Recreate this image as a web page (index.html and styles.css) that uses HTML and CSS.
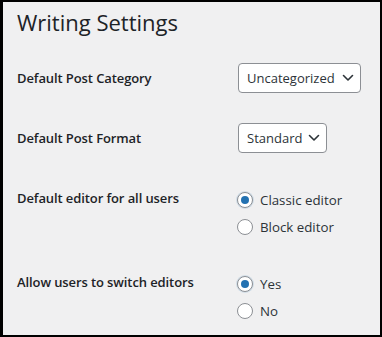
FILE: index.html
```html
<!DOCTYPE html>
<html lang="en">
<head>
<meta charset="utf-8">
<title>Writing Settings</title>
<link rel="stylesheet" href="styles.css">
</head>
<body>
<div class="frame">
  <h1 class="title">Writing Settings</h1>
  <div class="row row-first">
    <div class="label label-tall">Default Post Category</div>
    <div class="select select-wide">
      <span>Uncategorized</span>
      <svg class="chev" width="12" height="8" viewBox="0 0 12 8"><polyline points="1.5,1.5 6,6 10.5,1.5" fill="none" stroke="#2c3338" stroke-width="1.6" stroke-linecap="round" stroke-linejoin="round"/></svg>
    </div>
  </div>
  <div class="row row-second">
    <div class="label label-tall">Default Post Format</div>
    <div class="select">
      <span>Standard</span>
      <svg class="chev" width="12" height="8" viewBox="0 0 12 8"><polyline points="1.5,1.5 6,6 10.5,1.5" fill="none" stroke="#2c3338" stroke-width="1.6" stroke-linecap="round" stroke-linejoin="round"/></svg>
    </div>
  </div>
  <div class="row row-radio">
    <div class="label label-low">Default editor for all users</div>
    <div class="radios">
      <div class="opt"><span class="radio checked"></span><span>Classic editor</span></div>
      <div class="opt"><span class="radio"></span><span>Block editor</span></div>
    </div>
  </div>
  <div class="row row-radio2">
    <div class="label label-low">Allow users to switch editors</div>
    <div class="radios">
      <div class="opt"><span class="radio checked"></span><span>Yes</span></div>
      <div class="opt"><span class="radio"></span><span>No</span></div>
    </div>
  </div>
</div>
</body>
</html>
```

FILE: styles.css
```css
html, body {
  margin: 0;
  padding: 0;
  background: #000;
}
.frame {
  box-sizing: border-box;
  width: 382px;
  height: 337px;
  border-style: solid;
  border-color: #000;
  border-width: 2px 2px 2px 3px;
  background: #f0f0f1;
  padding: 0 0 0 14px;
  color: #1d2327;
  font-family: "Open Sans", "Noto Sans", sans-serif;
  overflow: hidden;
}
.title {
  margin: 0;
  padding-top: 5px;
  height: 30px;
  font-size: 22px;
  font-weight: 400;
  line-height: 30px;
  color: #1d2327;
}
.row {
  display: flex;
  align-items: flex-start;
}
.row-first { margin-top: 26px; }
.row-second { margin-top: 30px; }
.row-radio { margin-top: 33px; }
.row-radio2 { margin-top: 30px; }
.label {
  width: 221px;
  flex: none;
  font-size: 13px;
  font-weight: 600;
  line-height: 21px;
  letter-spacing: -0.1px;
}
.label-tall { line-height: 30px; }
.label-low { padding-top: 2px; }
.select {
  box-sizing: border-box;
  height: 30px;
  width: 89px;
  display: flex;
  align-items: center;
  justify-content: space-between;
  padding: 0 6px 0 8px;
  background: #fff;
  border: 1px solid #8c8f94;
  border-radius: 4px;
  font-size: 13px;
  color: #2c3338;
}
.select-wide { width: 123px; }
.chev { flex: none; }
.radios {
  display: flex;
  flex-direction: column;
}
.opt {
  display: flex;
  align-items: center;
  height: 27px;
  font-size: 13.3px;
  color: #2c3338;
}
.radio {
  box-sizing: border-box;
  width: 16px;
  height: 16px;
  border: 1px solid #8c8f94;
  border-radius: 50%;
  background: #fff;
  margin-right: 7px;
  margin-left: -1px;
  display: flex;
  align-items: center;
  justify-content: center;
  flex: none;
}
.radio.checked {
  border-color: #8c8f94;
  box-shadow: 0 0 0 1px rgba(34, 113, 177, 0.15);
}
.radio.checked::after {
  content: "";
  width: 8px;
  height: 8px;
  border-radius: 50%;
  background: #2271b1;
}
```
